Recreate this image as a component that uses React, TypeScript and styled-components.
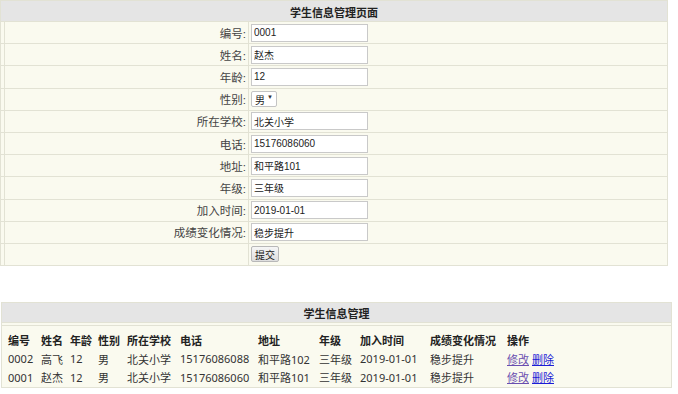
import styled, { createGlobalStyle } from "styled-components";

const GlobalStyle = createGlobalStyle`
  body {
    margin: 0;
    background: #ffffff;
    font-family: "Liberation Sans", "Noto Sans CJK SC", sans-serif;
    color: #333;
  }
`;

const colors = {
  cream: "#fafaef",
  grey: "#e5e5e5",
  line: "#e2e2d4",
  text: "#333333",
};

const FormTable = styled.table`
  width: 668px;
  border-collapse: collapse;
  background: ${colors.cream};
  border: 1px solid ${colors.line};
  font-size: 11.5px;

  th {
    height: 18px;
    background: ${colors.grey};
    font-size: 11px;
    font-weight: 700;
    color: #222;
    border-bottom: 1px solid ${colors.line};
    padding: 2px 0 0;
  }

  td {
    height: 21.2px;
    padding: 0;
    border-bottom: 1px solid ${colors.line};
  }
`;

const LabelCell = styled.td`
  width: 245px;
  text-align: right;
  padding-right: 2px !important;
  border-right: 1px solid ${colors.line};
  color: #444;
  box-shadow: inset 3px 0 0 ${colors.cream}, inset 4px 0 0 ${colors.line};
`;

const FieldCell = styled.td`
  padding-left: 2px !important;
`;

const TextInput = styled.input`
  box-sizing: border-box;
  width: 117px;
  height: 18px;
  margin: 0;
  padding: 0 2px;
  border: 1px solid #c9c9c9;
  background: #fff;
  font-family: "Liberation Sans", "Noto Sans CJK SC", sans-serif;
  font-size: 10px;
  color: #222;
  vertical-align: middle;
`;

const SelectBox = styled.span`
  position: relative;
  display: inline-block;
  vertical-align: middle;

  select {
    box-sizing: border-box;
    appearance: none;
    width: 26px;
    height: 16px;
    margin: 0;
    padding: 0 0 0 3px;
    border: 1px solid #c4c4c4;
    border-radius: 2px;
    background: #fff;
    font-family: "Noto Sans CJK SC", sans-serif;
    font-size: 10px;
    color: #222;
  }

  i {
    position: absolute;
    right: 4px;
    top: 3px;
    font-style: normal;
    font-size: 6px;
    color: #333;
    pointer-events: none;
  }
`;

const SubmitButton = styled.button`
  box-sizing: border-box;
  width: 28px;
  height: 16px;
  margin: 0;
  padding: 0;
  border: 1px solid #b8b8b8;
  border-radius: 2px;
  background: linear-gradient(#f6f6f6, #dedede);
  font-family: "Noto Sans CJK SC", sans-serif;
  font-size: 10px;
  color: #222;
  vertical-align: middle;
`;

const Spacer = styled.div`
  height: 36px;
`;

const ListTable = styled.table`
  width: 671px;
  margin-left: 1px;
  border-collapse: collapse;
  background: ${colors.cream};
  border: 1px solid ${colors.line};

  th {
    height: 19px;
    padding: 0;
    background: ${colors.grey};
    font-family: "Noto Sans CJK SC", sans-serif;
    font-size: 11px;
    font-weight: 700;
    color: #222;
    border-bottom: 1px solid ${colors.line};
  }
`;

const ListBody = styled.td`
  padding: 2px 0 0 0;
`;

const Grid = styled.table`
  width: 100%;
  border-collapse: collapse;
  border-top: 1px solid ${colors.line};
  font-family: "Noto Sans", "Noto Sans CJK SC", sans-serif;
  font-size: 11px;
  color: ${colors.text};

  thead td {
    padding-top: 5px;
    font-weight: 700;
    color: #222;
  }

  td {
    height: 18.5px;
    padding: 0;
    white-space: nowrap;
  }

  td:first-child {
    padding-left: 6px;
  }
`;

const ActionLink = styled.a<{ $visited?: boolean }>`
  color: ${(p) => (p.$visited ? "#6a4fb0" : "#1c1cd6")};
  text-decoration: underline;
  margin-right: 3px;
  cursor: pointer;
`;

const fields = [
  { label: "编号", value: "0001" },
  { label: "姓名", value: "赵杰" },
  { label: "年龄", value: "12" },
  { label: "性别", value: "男", select: true },
  { label: "所在学校", value: "北关小学" },
  { label: "电话", value: "15176086060" },
  { label: "地址", value: "和平路101" },
  { label: "年级", value: "三年级" },
  { label: "加入时间", value: "2019-01-01" },
  { label: "成绩变化情况", value: "稳步提升" },
];

const columns = [
  { title: "编号", w: 39 },
  { title: "姓名", w: 29 },
  { title: "年龄", w: 28 },
  { title: "性别", w: 29 },
  { title: "所在学校", w: 53 },
  { title: "电话", w: 78 },
  { title: "地址", w: 61 },
  { title: "年级", w: 41 },
  { title: "加入时间", w: 70 },
  { title: "成绩变化情况", w: 77 },
  { title: "操作", w: 0 },
];

const students = [
  ["0002", "高飞", "12", "男", "北关小学", "15176086088", "和平路102", "三年级", "2019-01-01", "稳步提升"],
  ["0001", "赵杰", "12", "男", "北关小学", "15176086060", "和平路101", "三年级", "2019-01-01", "稳步提升"],
];

export default function App() {
  return (
    <>
      <GlobalStyle />
      <FormTable>
        <thead>
          <tr>
            <th colSpan={2}>学生信息管理页面</th>
          </tr>
        </thead>
        <tbody>
          {fields.map((f) => (
            <tr key={f.label}>
              <LabelCell>{f.label}:</LabelCell>
              <FieldCell>
                {f.select ? (
                  <SelectBox>
                    <select defaultValue={f.value}>
                      <option>男</option>
                      <option>女</option>
                    </select>
                    <i>▼</i>
                  </SelectBox>
                ) : (
                  <TextInput defaultValue={f.value} />
                )}
              </FieldCell>
            </tr>
          ))}
          <tr>
            <LabelCell />
            <FieldCell>
              <SubmitButton>提交</SubmitButton>
            </FieldCell>
          </tr>
        </tbody>
      </FormTable>

      <Spacer />

      <ListTable>
        <thead>
          <tr>
            <th>学生信息管理</th>
          </tr>
        </thead>
        <tbody>
          <tr>
            <ListBody>
              <Grid>
                <colgroup>
                  {columns.map((c) => (
                    <col key={c.title} style={c.w ? { width: c.w } : undefined} />
                  ))}
                </colgroup>
                <thead>
                  <tr>
                    {columns.map((c) => (
                      <td key={c.title}>{c.title}</td>
                    ))}
                  </tr>
                </thead>
                <tbody>
                  {students.map((s) => (
                    <tr key={s[0]}>
                      {s.map((v, i) => (
                        <td key={i}>{v}</td>
                      ))}
                      <td>
                        <ActionLink $visited>修改</ActionLink>
                        <ActionLink>删除</ActionLink>
                      </td>
                    </tr>
                  ))}
                </tbody>
              </Grid>
            </ListBody>
          </tr>
        </tbody>
      </ListTable>
    </>
  );
}
